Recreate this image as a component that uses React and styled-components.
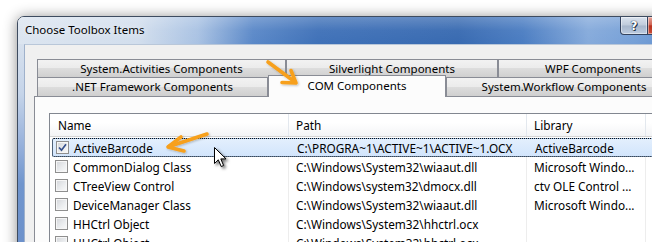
import React from "react";
import styled, { createGlobalStyle } from "styled-components";

const GlobalStyle = createGlobalStyle`
  html, body {
    margin: 0;
    padding: 0;
    background: #ffffff;
  }
  body {
    font-family: "Noto Sans", "Open Sans", sans-serif;
    font-size: 11.5px;
    color: #000;
  }
`;

const Page = styled.div`
  position: relative;
  width: 652px;
  height: 242px;
  overflow: hidden;
  box-sizing: border-box;
  padding: 16px 0 0 17px;
  background: #fff;
`;

const Window = styled.div`
  width: 679px;
  height: 262px;
  box-sizing: border-box;
  border: 1px solid #3e4c60;
  border-radius: 7px 7px 0 0;
  box-shadow: 0 1px 14px rgba(0, 0, 0, 0.45);
  display: flex;
  flex-direction: column;
  overflow: hidden;
`;

const TitleBar = styled.div`
  height: 27px;
  flex: none;
  display: flex;
  align-items: flex-start;
  background:
    linear-gradient(180deg, rgba(255, 255, 255, 0.22) 0%, rgba(255, 255, 255, 0.04) 50%, rgba(255, 255, 255, 0) 100%),
    linear-gradient(90deg, #dce5f0 0px, #d2deed 120px, #a9c2e3 180px, #5a88c8 235px, #3f71b8 300px, #386ab1 440px, #4b7dc2 505px, #85aadb 570px, #76a0d7 615px, #5a8acb 677px);
`;

const Title = styled.div`
  padding: 6px 0 0 7px;
  line-height: 14px;
  white-space: nowrap;
  text-shadow: 0 0 6px rgba(255, 255, 255, 0.9);
`;

const CaptionButtons = styled.div`
  margin-left: auto;
  margin-right: 4px;
  display: flex;
`;

const CaptionButton = styled.div`
  width: ${(p) => p.$w}px;
  height: 18px;
  box-sizing: border-box;
  border: 1px solid #34435e;
  border-top: none;
  display: flex;
  align-items: center;
  justify-content: center;
  color: #fff;
  font-family: "DejaVu Sans", sans-serif;
  font-weight: bold;
  font-size: 12px;
  text-shadow: 0 0 1px #1d2a40, 0 0 1px #1d2a40, 1px 1px 0 #2a3850;
  box-shadow: inset 0 0 0 1px rgba(255, 255, 255, 0.45);
`;

const HelpButton = styled(CaptionButton)`
  border-radius: 0 0 0 4px;
  background: linear-gradient(180deg, #dbe3ee 0%, #bfcbdb 48%, #a7b6cb 52%, #bccbe0 100%);
`;

const CloseButton = styled(CaptionButton)`
  border-left: none;
  border-radius: 0 0 4px 0;
  background: linear-gradient(180deg, #e6a59a 0%, #cf6352 46%, #b8321f 52%, #c8503a 100%);
`;

const Body = styled.div`
  flex: 1;
  display: flex;
`;

const SideFrame = styled.div`
  width: 6px;
  flex: none;
  background: linear-gradient(180deg, #d6e0ed 0px, #c5d4e9 50px, #93aeda 105px, #7095cd 140px, #6b8fca 100%);
`;

const Client = styled.div`
  flex: 1;
  box-sizing: border-box;
  border-left: 1px solid #9fb1cb;
  border-top: 1px solid #b9c7d9;
  background: #f0f0f0;
  padding: 14px 0 0 9px;
  display: flex;
  flex-direction: column;
`;

const TabRow = styled.div`
  display: flex;
  align-items: flex-start;
  margin-left: 3px;
`;

const Tab = styled.div`
  flex: none;
  width: ${(p) => p.$w}px;
  height: ${(p) => p.$h}px;
  box-sizing: border-box;
  border: 1px solid #898c95;
  border-bottom: none;
  background: linear-gradient(180deg, #f2f2f2 0%, #ebebeb 50%, #dddddd 50%, #cfcfcf 100%);
  display: flex;
  align-items: center;
  justify-content: center;
  white-space: nowrap;
  line-height: 14px;
`;

const ActiveTab = styled(Tab)`
  position: relative;
  z-index: 1;
  margin: -2px 0 -1px;
  background: #fcfcfc;
  padding-bottom: 1px;
`;

const Panel = styled.div`
  flex: 1;
  border: 1px solid #898c95;
  background: #fcfcfc;
  padding: 16px 0 0 14px;
  display: flex;
`;

const ListView = styled.div`
  flex: 1;
  border: 1px solid #828790;
  background: #fff;
  font-size: 11.8px;
`;

const Header = styled.div`
  display: grid;
  grid-template-columns: 239px 238px 119px 1fr;
  height: 23px;
  box-sizing: border-box;
  border-bottom: 1px solid #d5d5d5;
  background: linear-gradient(180deg, #ffffff 0%, #ffffff 40%, #f3f4f6 100%);
`;

const HeaderCell = styled.div`
  display: flex;
  align-items: center;
  padding-left: ${(p) => p.$pad || 7}px;
  border-right: 1px solid #e3e8ee;
  white-space: nowrap;
`;

const Rows = styled.div`
  padding: 1px 0 0 2px;
`;

const Row = styled.div`
  display: grid;
  grid-template-columns: 237px 238px 119px 1fr;
  height: 19px;
  box-sizing: border-box;
  ${(p) =>
    p.$selected &&
    `
    background: linear-gradient(180deg, #e3effd 0%, #d2e5fc 100%);
    border: 1px solid #8fb4e0;
    outline: 1px dotted #111;
    outline-offset: -1px;
    border-radius: 2px;
  `}
`;

const Cell = styled.div`
  display: flex;
  align-items: center;
  gap: 5px;
  padding-left: ${(p) => (p.$first ? 3 : 7)}px;
  border-right: 1px solid ${(p) => (p.$clear ? "transparent" : "#ededed")};
  white-space: nowrap;
  overflow: hidden;
  line-height: 14px;
`;

const CheckBox = styled.span`
  width: 13px;
  height: 13px;
  flex: none;
  box-sizing: border-box;
  border: 1px solid #8f8f8f;
  box-shadow: inset 0 0 0 1px #f6f6f6;
  background: linear-gradient(135deg, #d3d5d9 0%, #eceef0 60%, #fafafa 100%);
  display: flex;
  align-items: center;
  justify-content: center;
`;

const Overlay = styled.svg`
  position: absolute;
  left: 0;
  top: 0;
  z-index: 2;
  pointer-events: none;
`;

const items = [
  { name: "ActiveBarcode", path: "C:\\PROGRA~1\\ACTIVE~1\\ACTIVE~1.OCX", lib: "ActiveBarcode", checked: true },
  { name: "CommonDialog Class", path: "C:\\Windows\\System32\\wiaaut.dll", lib: "Microsoft Windo..." },
  { name: "CTreeView Control", path: "C:\\Windows\\system32\\dmocx.dll", lib: "ctv OLE Control ..." },
  { name: "DeviceManager Class", path: "C:\\Windows\\System32\\wiaaut.dll", lib: "Microsoft Windo..." },
  { name: "HHCtrl Object", path: "C:\\Windows\\System32\\hhctrl.ocx", lib: "" },
  { name: "HHCtrl Object", path: "C:\\Windows\\System32\\hhctrl.ocx", lib: "" },
];

function Check() {
  return (
    <svg width="9" height="9" viewBox="0 0 9 9">
      <path d="M1 4.5 L3.5 7.2 L8 1.2" fill="none" stroke="#36508c" strokeWidth="1.7" />
    </svg>
  );
}

function Pointers() {
  const orange = "#f7a01c";
  return (
    <Overlay width="652" height="242" viewBox="0 0 652 242">
      <defs>
        <filter id="soft" x="-20%" y="-20%" width="140%" height="140%">
          <feDropShadow dx="1" dy="1" stdDeviation="1" floodColor="#000" floodOpacity="0.25" />
        </filter>
        <filter id="cursorShadow" x="-50%" y="-50%" width="200%" height="200%">
          <feDropShadow dx="2" dy="2" stdDeviation="1.6" floodColor="#000" floodOpacity="0.55" />
        </filter>
      </defs>
      <g fill="none" stroke={orange} strokeWidth="3.6" strokeLinecap="round" strokeLinejoin="round" filter="url(#soft)">
        <path d="M268 62 L295 82" />
        <path d="M291 70.5 L296 83 L282 82.5" />
        <path d="M207 134 L169 146.5" />
        <path d="M181 137 L168 147 L184 151" />
      </g>
      <path
        d="M214.5 147.5 L214.5 163.5 L218.3 159.8 L221.2 166.5 L223.6 165.5 L220.8 158.9 L226 158.9 Z"
        fill="#fff"
        stroke="#000"
        strokeWidth="1"
        strokeLinejoin="round"
        filter="url(#cursorShadow)"
      />
    </Overlay>
  );
}

export default function App() {
  return (
    <>
      <GlobalStyle />
      <Page>
        <Window>
          <TitleBar>
            <Title>Choose Toolbox Items</Title>
            <CaptionButtons>
              <HelpButton $w={28}>?</HelpButton>
              <CloseButton $w={43} />
            </CaptionButtons>
          </TitleBar>
          <Body>
            <SideFrame />
            <Client>
              <TabRow>
                <Tab $w={249} $h={18}>System.Activities Components</Tab>
                <Tab $w={212} $h={18}>Silverlight Components</Tab>
                <Tab $w={190} $h={18}>WPF Components</Tab>
              </TabRow>
              <TabRow>
                <Tab $w={231} $h={19}>.NET Framework Components</Tab>
                <ActiveTab $w={178} $h={22}>COM Components</ActiveTab>
                <Tab $w={236} $h={19}>System.Workflow Components</Tab>
              </TabRow>
              <Panel>
                <ListView>
                  <Header>
                    <HeaderCell $pad={8}>Name</HeaderCell>
                    <HeaderCell>Path</HeaderCell>
                    <HeaderCell>Library</HeaderCell>
                    <HeaderCell />
                  </Header>
                  <Rows>
                    {items.map((item, i) => {
                      const sel = i === 0;
                      return (
                        <Row key={i} $selected={sel}>
                          <Cell $first $clear={sel}>
                            <CheckBox>{item.checked && <Check />}</CheckBox>
                            {item.name}
                          </Cell>
                          <Cell $clear={sel}>{item.path}</Cell>
                          <Cell $clear={sel}>{item.lib}</Cell>
                          <Cell $clear={sel} />
                        </Row>
                      );
                    })}
                  </Rows>
                </ListView>
              </Panel>
            </Client>
          </Body>
        </Window>
        <Pointers />
      </Page>
    </>
  );
}
